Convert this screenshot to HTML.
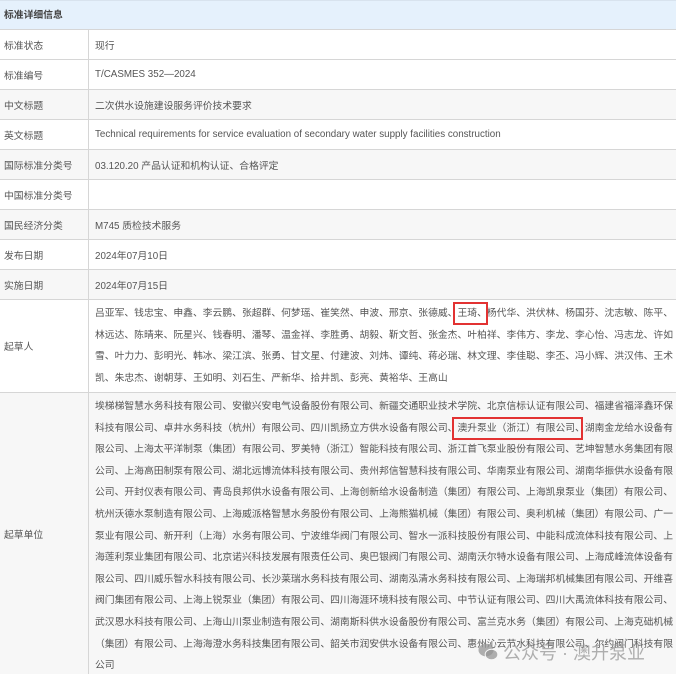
<!DOCTYPE html>
<html><head><meta charset="utf-8"><style>
*{margin:0;padding:0;box-sizing:border-box}
body{width:676px;height:674px;overflow:hidden;background:#fff;font-family:"Liberation Sans","Noto Sans CJK SC",sans-serif;color:#555;font-size:9.8px;position:relative}
.hd{position:absolute;left:0;top:0;width:676px;height:30px;background:#e5f1fc;border-top:1px solid #d8e3ee;border-bottom:1px solid #d6d6d6;padding-left:4px;line-height:29px;font-weight:bold;color:#444}
.r{position:absolute;left:0;width:676px;border-bottom:1px solid #d6d6d6}
.r .l{position:absolute;left:0;top:0;bottom:0;width:89px;border-right:1px solid #d6d6d6;padding-left:4px;display:flex;align-items:center;white-space:nowrap}
.r .v{position:absolute;left:95px;top:0;bottom:0;display:flex;align-items:center;white-space:nowrap}
.g{background:#f7f7f7}
.ml{position:absolute;left:95px;white-space:nowrap;line-height:21.6px}
.box{position:absolute;border:2px solid #e23232}
.wm{position:absolute;left:478px;top:639px;font-size:18px;color:rgba(150,150,150,.75);white-space:nowrap;display:flex;align-items:center;gap:5px}
</style></head><body>
<div class="hd">标准详细信息</div>
<div class="r" style="top:30px;height:30px"><div class="l">标准状态</div><div class="v">现行</div></div>
<div class="r" style="top:60px;height:30px"><div class="l">标准编号</div><div class="v">T/CASMES 352—2024</div></div>
<div class="r g" style="top:90px;height:30px"><div class="l">中文标题</div><div class="v">二次供水设施建设服务评价技术要求</div></div>
<div class="r" style="top:120px;height:30px"><div class="l">英文标题</div><div class="v">Technical requirements for service evaluation of secondary water supply facilities construction</div></div>
<div class="r g" style="top:150px;height:30px"><div class="l">国际标准分类号</div><div class="v">03.120.20 产品认证和机构认证、合格评定</div></div>
<div class="r" style="top:180px;height:30px"><div class="l">中国标准分类号</div><div class="v"></div></div>
<div class="r g" style="top:210px;height:30px"><div class="l">国民经济分类</div><div class="v">M745 质检技术服务</div></div>
<div class="r" style="top:240px;height:30px"><div class="l">发布日期</div><div class="v">2024年07月10日</div></div>
<div class="r g" style="top:270px;height:30px"><div class="l">实施日期</div><div class="v">2024年07月15日</div></div>
<div class="r" style="top:300px;height:93px"><div class="l">起草人</div>
<div class="ml" style="left:95px;top:3px">吕亚军、钱忠宝、申鑫、李云鹏、张超群、何梦瑶、崔笑然、申波、邢京、张德威、王琦、杨代华、洪伏林、杨国芬、沈志敏、陈平、<br>林远达、陈晴来、阮星兴、钱春明、潘琴、温金祥、李胜勇、胡毅、靳文哲、张金杰、叶柏祥、李伟方、李龙、李心怡、冯志龙、许如<br>雪、叶力力、彭明光、韩冰、梁江滨、张勇、甘文星、付建波、刘炜、谭纯、蒋必瑞、林文理、李佳聪、李丕、冯小辉、洪汉伟、王术<br>凯、朱忠杰、谢朝芽、王如明、刘石生、严新华、拾井凯、彭亮、黄裕华、王高山</div></div>
<div class="box" style="left:453px;top:302px;width:35px;height:23px"></div>
<div class="r g" style="top:393px;height:281px;border-bottom:none"><div class="l">起草单位</div>
<div class="ml" style="top:3px">埃梯梯智慧水务科技有限公司、安徽兴安电气设备股份有限公司、新疆交通职业技术学院、北京信标认证有限公司、福建省福泽鑫环保<br>科技有限公司、卓井水务科技（杭州）有限公司、四川凯扬立方供水设备有限公司、澳升泵业（浙江）有限公司、湖南金龙给水设备有<br>限公司、上海太平洋制泵（集团）有限公司、罗美特（浙江）智能科技有限公司、浙江首飞泵业股份有限公司、艺坤智慧水务集团有限<br>公司、上海高田制泵有限公司、湖北远博流体科技有限公司、贵州邦信智慧科技有限公司、华南泵业有限公司、湖南华振供水设备有限<br>公司、开封仪表有限公司、青岛良邦供水设备有限公司、上海创新给水设备制造（集团）有限公司、上海凯泉泵业（集团）有限公司、<br>杭州沃德水泵制造有限公司、上海威派格智慧水务股份有限公司、上海熊猫机械（集团）有限公司、奥利机械（集团）有限公司、广一<br>泵业有限公司、新开利（上海）水务有限公司、宁波维华阀门有限公司、智水一派科技股份有限公司、中能科成流体科技有限公司、上<br>海莲利泵业集团有限公司、北京诺兴科技发展有限责任公司、奥巴银阀门有限公司、湖南沃尔特水设备有限公司、上海成峰流体设备有<br>限公司、四川威乐智水科技有限公司、长沙莱瑞水务科技有限公司、湖南泓清水务科技有限公司、上海瑞邦机械集团有限公司、开维喜<br>阀门集团有限公司、上海上锐泵业（集团）有限公司、四川海涯环境科技有限公司、中节认证有限公司、四川大禹流体科技有限公司、<br>武汉恩水科技有限公司、上海山川泵业制造有限公司、湖南斯科供水设备股份有限公司、富兰克水务（集团）有限公司、上海克础机械<br>（集团）有限公司、上海海澄水务科技集团有限公司、韶关市润安供水设备有限公司、惠州沁云节水科技有限公司、尔约阀门科技有限<br>公司</div></div>
<div class="box" style="left:452px;top:417px;width:131px;height:23px"></div>
<div class="wm"><svg width="20" height="18" viewBox="0 0 20 18"><ellipse cx="8" cy="7" rx="7.5" ry="6.3" fill="rgba(150,150,150,.75)"/><ellipse cx="13.5" cy="11.5" rx="6.3" ry="5.3" fill="rgba(150,150,150,.75)" stroke="#f7f7f7" stroke-width="1"/></svg><span>公众号 · 澳升泵业</span></div>
</body></html>
